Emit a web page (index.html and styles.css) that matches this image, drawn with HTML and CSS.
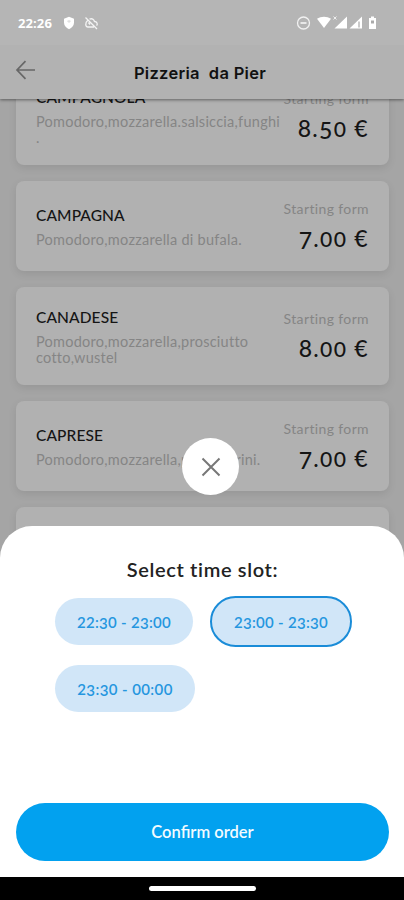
FILE: index.html
```html
<!DOCTYPE html>
<html lang="en">
<head>
<meta charset="utf-8">
<meta name="viewport" content="width=device-width, initial-scale=1">
<title>Pizzeria da Pier</title>
<link rel="stylesheet" href="styles.css">
</head>
<body>
<div class="phone">
  <header class="top">
    <div class="status">
      <span class="clock">22:26</span>
      <svg class="shield" width="12" height="14" viewBox="0 0 12 14"><path d="M6 .8 11 2.7V6.5C11 9.6 8.9 12 6 13.2 3.1 12 1 9.6 1 6.5V2.7Z" fill="#fff"/><path d="M4.2 5.2h3.6M6 4v3" stroke="#d5d5d5" stroke-width=".8"/></svg>
      <svg class="muted" width="15" height="14" viewBox="0 0 15 14" fill="none" stroke="#f4f4f4" stroke-width="1.3"><path d="M1.5 1.5 13 13M5.5 3.2C8 2 10 3.3 10.5 5.5 13 5.7 14 7.8 12.6 9.6M3.6 4.5C1.2 6.5 1 11 4 11H10M4.5 6.5 6 8.5"/></svg>
      <span class="spacer"></span>
      <svg width="82" height="16" viewBox="0 0 82 16" fill="none">
        <circle cx="8.5" cy="8" r="6" stroke="#f1f1f1" stroke-width="1.3"/><path d="M5.5 8h6" stroke="#f1f1f1" stroke-width="1.7"/>
        <path d="M22 3.8C26 .9 32 .9 36 3.8L29 13Z" fill="#fff"/>
        <path d="m38.5 1.5 3 3m0-3-3 3" stroke="#eee"/>
        <path d="M52 1.5V13.5H39.5Z" fill="#fff"/>
        <path d="M67 1.5V13.5H54.5Z" fill="#fff"/><path d="M64 6.5v6" stroke="#b5b5b5" stroke-width="1.4"/>
        <path d="M76 1.5h3v1.5h2v11h-7V3h2Z" fill="#fff"/><path d="M76 7h3" stroke="#aaa" stroke-width="3"/>
      </svg>
    </div>
    <div class="bar">
      <svg class="back" width="22" height="20" viewBox="0 0 22 20" fill="none" stroke="#676767" stroke-width="1.7"><path d="M20 10H2M10.5 1.2 2 10l8.5 8.8"/></svg>
      <h1>Pizzeria&nbsp; da Pier</h1>
    </div>
  </header>

  <main class="list">
    <article class="card tall first">
      <div class="info"><h2>CAMPAGNOLA</h2><p>Pomodoro,mozzarella.salsiccia,funghi<br>.</p></div>
      <div class="cost"><span class="from">Starting form</span><span class="price">8.<i>5</i><b>0</b> €</span></div>
    </article>
    <article class="card">
      <div class="info"><h2>CAMPAGNA</h2><p>Pomodoro,mozzarella di bufala.</p></div>
      <div class="cost"><span class="from">Starting form</span><span class="price"><i>7</i>.<b>00</b> €</span></div>
    </article>
    <article class="card tall">
      <div class="info"><h2>CANADESE</h2><p>Pomodoro,mozzarella,prosciutto<br>cotto,wustel</p></div>
      <div class="cost"><span class="from">Starting form</span><span class="price">8.<b>00</b> €</span></div>
    </article>
    <article class="card">
      <div class="info"><h2>CAPRESE</h2><p>Pomodoro,mozzarella,pomodorini.</p></div>
      <div class="cost"><span class="from">Starting form</span><span class="price"><i>7</i>.<b>00</b> €</span></div>
    </article>
    <article class="card"></article>
  </main>

  <section class="sheet">
    <button class="close" aria-label="Close"><svg width="20" height="20" viewBox="0 0 20 20" stroke="#777" stroke-width="2"><path d="m1.5 1.5 17 17m0-17-17 17"/></svg></button>
    <h3>Select time slot:</h3>
    <div class="slots">
      <button class="slot">22:<i>3</i>0 - 2<i>3</i>:00</button>
      <button class="slot selected">2<i>3</i>:00 - 2<i>3</i>:<i>3</i>0</button>
      <button class="slot third">2<i>3</i>:<i>3</i>0 - 00:00</button>
    </div>
    <button class="confirm">Confirm order</button>
  </section>
  <footer class="nav"><span></span></footer>
</div>
</body>
</html>
```
FILE: styles.css
```css
* { box-sizing: border-box; }
body { margin: 0; font-family: Lato, "Open Sans", sans-serif; }
h1, h2, h3, p { margin: 0; }
button { border: 0; padding: 0; font-family: inherit; }
.phone { position: relative; width: 404px; height: 900px; overflow: hidden; background: #a5a5a5; }
.top { position: relative; z-index: 1; height: 99px; background: #b2b2b2; box-shadow: 0 1px 3px rgba(0,0,0,.45); }
.status { display: flex; align-items: center; height: 45px; padding: 0 27px 0 18px; background: #b5b5b5; }
.clock { width: 34px; color: #fff; font: 700 13px/16px "Open Sans", sans-serif; letter-spacing: .1px; white-space: nowrap; }
.shield { margin-left: 11px; }
.muted { margin-left: 9px; }
.spacer { flex: 1; }
.bar { position: relative; display: flex; align-items: center; justify-content: center; height: 54px; padding: 2px 4px 0 0; }
.back { position: absolute; left: 15px; top: 15px; }
h1 { font: 600 16.5px/22px Inter, sans-serif; color: #111; white-space: nowrap; letter-spacing: .3px; }
.list { display: flex; flex-direction: column; gap: 16px; margin: 0 15px 0 16px; }
.card { display: flex; flex: none; justify-content: space-between; align-items: center; height: 90px; padding: 0 20px 1px; border-radius: 8px; background: #b1b1b1; box-shadow: 0 3px 9px rgba(0,0,0,.09); }
.tall { height: 98px; }
.first { margin-top: -32px; }
.info { width: 246px; padding-top: 2px; white-space: nowrap; }
h2 { font-size: 15.5px; line-height: 20px; font-weight: 500; color: #151515; margin-bottom: 7px; letter-spacing: .1px; }
.info p { font-size: 14.5px; line-height: 16px; color: #858585; letter-spacing: .26px; }
.cost { display: flex; flex-direction: column; align-items: flex-end; white-space: nowrap; padding-top: 5px; }
.from { font-size: 14px; line-height: 18px; color: #858585; letter-spacing: .37px; }
.price { font-size: 23px; line-height: 34px; font-weight: 500; color: #151515; margin-top: 3px; letter-spacing: 1.3px; }
i { position: relative; top: .1em; font-style: normal; }
b { font-size: .92em; font-weight: inherit; }
.sheet { position: absolute; left: 0; right: 0; top: 526px; height: 351px; padding: 30px 15px 0 16px; background: #fff; border-radius: 32px 32px 0 0; }
.close { position: absolute; left: 182px; top: -88px; width: 57px; height: 57px; display: grid; place-items: center; border-radius: 50%; background: #fff; }
h3 { font-size: 20px; line-height: 26px; font-weight: 600; text-align: center; color: #222; letter-spacing: .65px; }
.slots { display: grid; grid-template-columns: 139px 142px; column-gap: 16px; row-gap: 18px; margin: 14px 0 0 39px; height: 207px; align-content: start; align-items: center; }
.slot { width: 138px; height: 47px; border-radius: 24px; background: #d1e6f8; color: #2596df; font-size: 15px; font-weight: 600; white-space: nowrap; letter-spacing: .3px; }
.slot.selected { width: 142px; height: 51px; border: 2px solid #1a8cd8; border-radius: 26px; }
.slot.third { width: 140px; letter-spacing: .4px; }
.confirm { display: block; width: 100%; height: 58px; border-radius: 29px; background: #02a1ef; color: #f3fbff; font-size: 16.5px; font-weight: 600; }
.nav { position: absolute; left: 0; right: 0; bottom: 0; height: 23px; display: flex; justify-content: center; align-items: center; background: #000; }
.nav span { width: 107px; height: 5px; border-radius: 3px; background: #fff; }
```
